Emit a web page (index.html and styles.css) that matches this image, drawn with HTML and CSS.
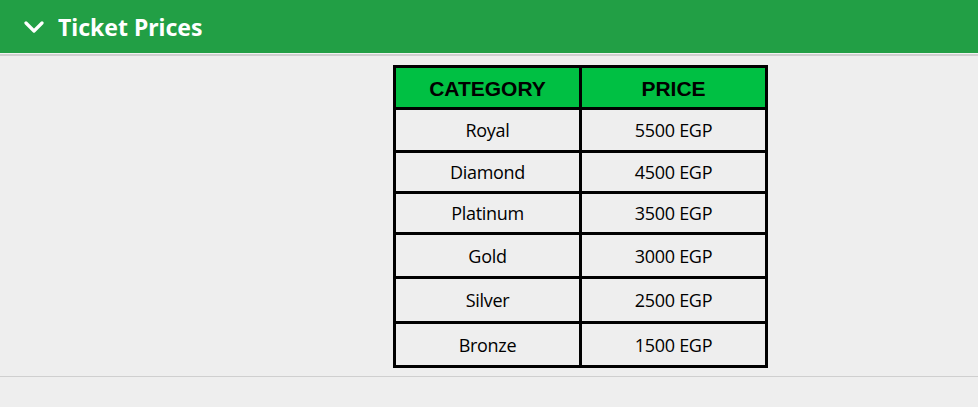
FILE: index.html
```
<!DOCTYPE html>
<html>
<head>
<meta charset="utf-8">
<link rel="stylesheet" href="styles.css">
</head>
<body>
<section class="panel">
  <header class="panel-head">
    <svg class="chev" width="20" height="13" viewBox="0 0 20 13"><path d="M2 2 L10 10 L18 2" fill="none" stroke="#fff" stroke-width="3.2" stroke-linecap="round" stroke-linejoin="round"/></svg>
    <h2 class="panel-title">Ticket Prices</h2>
  </header>
  <div class="panel-body">
    <table class="prices">
      <thead>
        <tr><th>CATEGORY</th><th>PRICE</th></tr>
      </thead>
      <tbody>
        <tr><td>Royal</td><td>5500 EGP</td></tr>
        <tr><td>Diamond</td><td>4500 EGP</td></tr>
        <tr><td>Platinum</td><td>3500 EGP</td></tr>
        <tr><td>Gold</td><td>3000 EGP</td></tr>
        <tr><td>Silver</td><td>2500 EGP</td></tr>
        <tr><td>Bronze</td><td>1500 EGP</td></tr>
      </tbody>
    </table>
  </div>
</section>
</body>
</html>
```
FILE: styles.css
```
html, body {
  margin: 0;
  padding: 0;
  background: #eeeeee;
}
.panel-head {
  height: 54px;
  background: #229f45;
  display: flex;
  align-items: center;
  padding-left: 24px;
  gap: 14px;
  box-sizing: border-box;
  border-bottom: 1px solid #f2f2f2;
}
.chev {
  display: block;
  margin-top: 2px;
}
.panel-title {
  margin: 0;
  color: #fff;
  font-family: "Noto Sans", sans-serif;
  font-weight: 700;
  font-size: 23px;
  line-height: 1;
  padding-top: 2px;
}
.panel-body {
  border-top: 2px solid #cfcfcf;
  border-bottom: 1px solid #cfcfcf;
  padding: 9px 0 8px 393px;
}
.prices {
  border-collapse: collapse;
  border: 3px solid #000;
}
.prices th, .prices td {
  border: 3px solid #000;
  text-align: center;
  padding: 0;
}
.prices th {
  background: #00c043;
  font-family: "Liberation Sans", Arial, sans-serif;
  font-weight: 700;
  font-size: 21px;
  height: 37px;
  color: #000;
  padding-top: 2px;
}
.prices th:first-child, .prices td:first-child { width: 183px; }
.prices th:last-child, .prices td:last-child { width: 183px; }
.prices td {
  font-family: "Open Sans", sans-serif;
  font-size: 18px;
  letter-spacing: -0.3px;
  height: 40px;
  color: #000;
}
.prices tbody tr:nth-child(2) td,
.prices tbody tr:nth-child(3) td { height: 38px; }
.prices tbody tr:nth-child(4) td,
.prices tbody tr:nth-child(6) td { height: 41px; }
.prices tbody tr:nth-child(5) td { height: 42px; }
```
